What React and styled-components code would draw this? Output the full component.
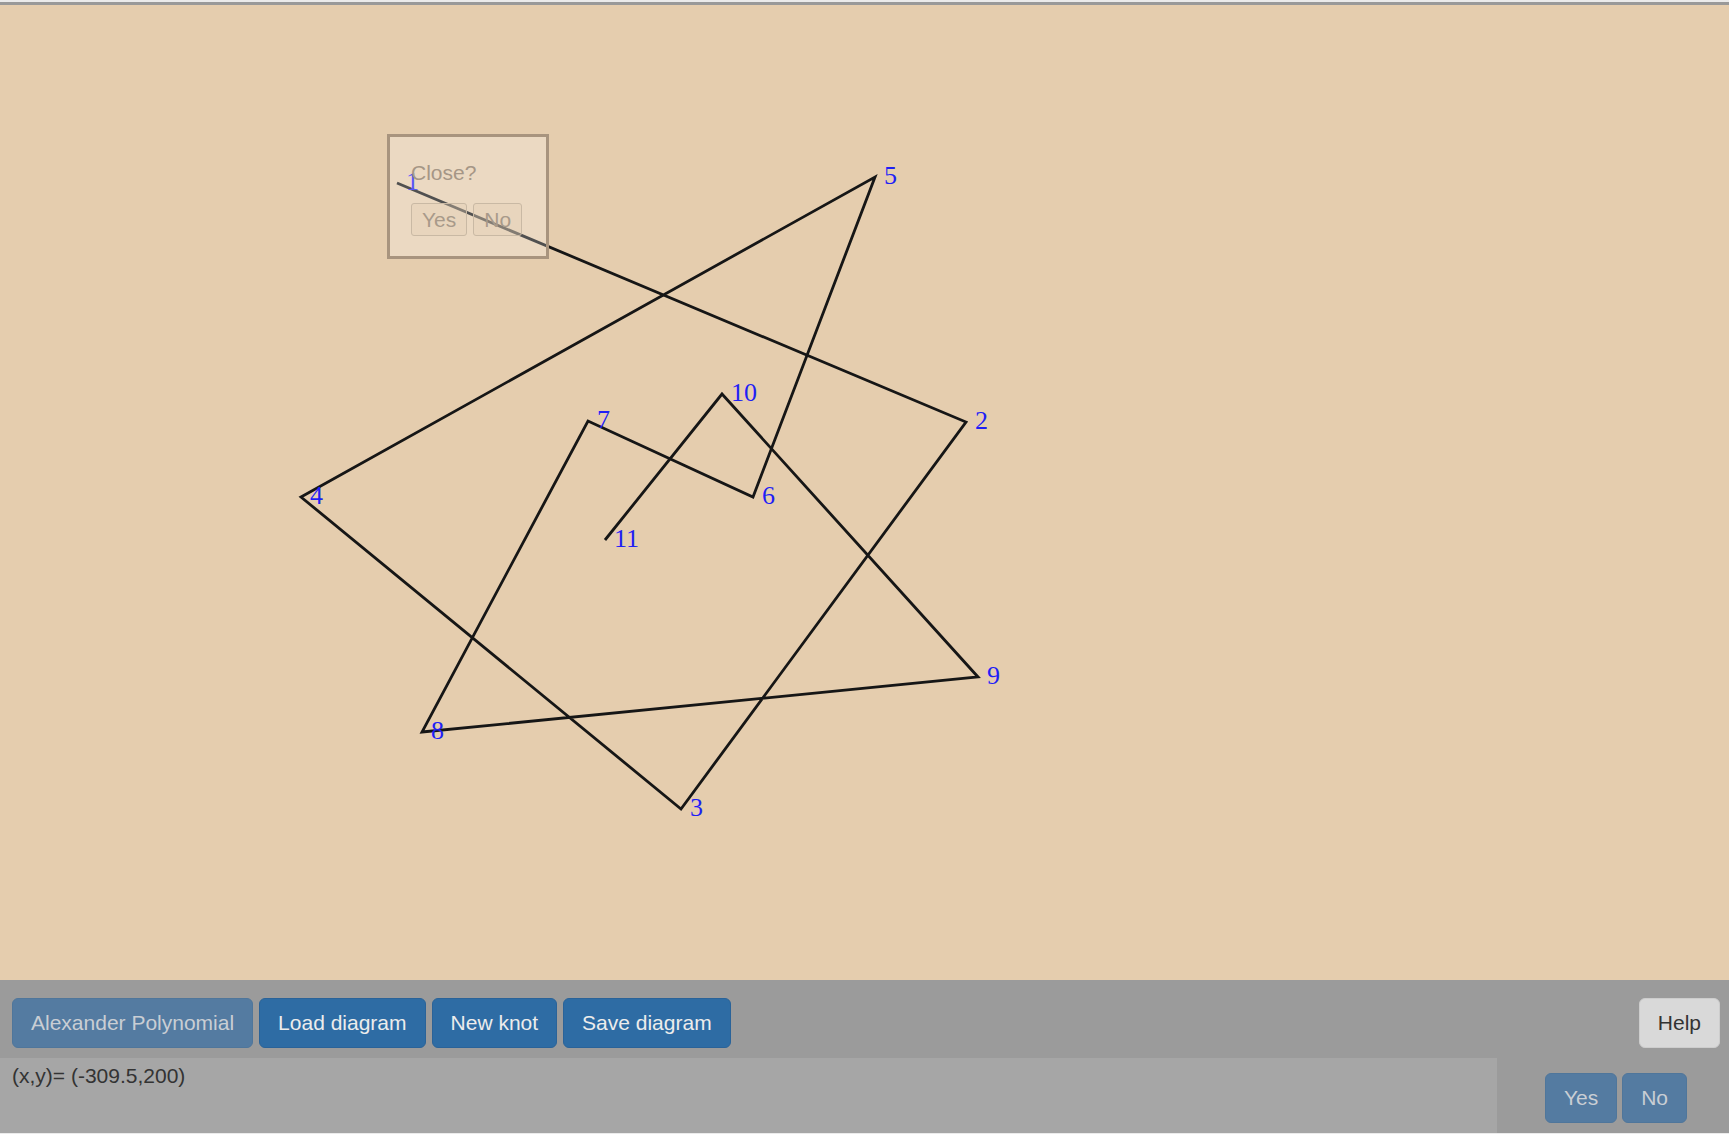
import React from 'react'
import styled, { createGlobalStyle } from 'styled-components'

const GlobalStyle = createGlobalStyle`
  html, body {
    margin: 0;
    padding: 0;
    background: #ebebeb;
    font-family: "Liberation Sans", Arial, sans-serif;
  }
  * { box-sizing: border-box; }
`

// vertices of the knot, in canvas coordinates (canvas starts 5px below page top)
const points = [
  [397, 178],
  [966, 417],
  [681, 804],
  [301, 492],
  [875, 172],
  [753, 492],
  [588, 416],
  [422, 727],
  [978, 672],
  [722, 389],
  [605, 535],
]

const Page = styled.div`
  width: 1729px;
  height: 1134px;
  padding-top: 2px;
  display: flex;
  flex-direction: column;
  overflow: hidden;
`

const Canvas = styled.div`
  position: relative;
  height: 978px;
  background: #e5cdae;
  border-top: 3px solid #999999;
`

const Drawing = styled.svg`
  display: block;
  width: 100%;
  height: 100%;
`

const Label = styled.text`
  font-family: "Liberation Serif", "Times New Roman", serif;
  font-size: 26px;
  fill: #1f1ff5;
`

const Dialog = styled.div`
  position: absolute;
  left: 387px;
  top: 129px;
  width: 162px;
  height: 125px;
  padding: 23px 0 0 21px;
  border: 3px solid #a8947e;
  background: rgba(255, 255, 255, 0.25);
`

const DialogText = styled.div`
  font-size: 21px;
  line-height: 25px;
  color: #a59686;
  margin-bottom: 18px;
`

const DialogButtons = styled.div`
  display: flex;
  gap: 6px;
`

const DialogButton = styled.button`
  font-family: "Liberation Sans", Arial, sans-serif;
  font-size: 21px;
  line-height: 23px;
  padding: 4px 10px;
  border: 1px solid #c9b9a4;
  border-radius: 3px;
  background: rgba(225, 205, 180, 0.35);
  color: #a89a8a;
`

const Panel = styled.div`
  flex: 1;
  background: #9b9b9b;
  display: flex;
  flex-direction: column;
  border-bottom: 1px solid #ebebeb;
`

const Toolbar = styled.div`
  height: 78px;
  padding: 18px 9px 0 12px;
  display: flex;
  align-items: flex-start;
  justify-content: space-between;
`

const Group = styled.div`
  display: flex;
  align-items: flex-start;
  gap: ${p => p.$gap || 6}px;
`

const Button = styled.button`
  font-family: "Liberation Sans", Arial, sans-serif;
  font-size: 21px;
  line-height: 26px;
  padding: 11px 18px;
  border-radius: 6px;
  border: 1px solid ${p => (p.$light ? '#cdcdcd' : p.$dim ? '#4f769b' : '#2a6399')};
  background: ${p => (p.$light ? '#d9d9d9' : p.$dim ? '#547ba1' : '#2e6ca4')};
  color: ${p => (p.$light ? '#333333' : p.$dim ? '#c9ced4' : '#ececec')};
  cursor: pointer;
`

const StatusRow = styled.div`
  flex: 1;
  display: flex;
`

const Coords = styled.div`
  width: 1497px;
  background: #a6a6a6;
  padding: 5px 12px 0;
  font-size: 21px;
  line-height: 25px;
  color: #333333;
`

const Confirm = styled.div`
  flex: 1;
  display: flex;
  align-items: flex-start;
  justify-content: flex-end;
  padding: 15px 42px 0 0;
`

export default function App() {
  return (
    <Page>
      <GlobalStyle />
      <Canvas>
        <Drawing>
          <polyline
            points={points.map(p => p.join(',')).join(' ')}
            fill="none"
            stroke="#161616"
            strokeWidth="2.8"
            strokeLinejoin="miter"
          />
          {points.map(([x, y], i) => (
            <Label key={i} x={x + 9} y={y + 7}>
              {i + 1}
            </Label>
          ))}
        </Drawing>
        <Dialog>
          <DialogText>Close?</DialogText>
          <DialogButtons>
            <DialogButton>Yes</DialogButton>
            <DialogButton>No</DialogButton>
          </DialogButtons>
        </Dialog>
      </Canvas>
      <Panel>
        <Toolbar>
          <Group>
            <Button $dim>Alexander Polynomial</Button>
            <Button>Load diagram</Button>
            <Button>New knot</Button>
            <Button>Save diagram</Button>
          </Group>
          <Button $light>Help</Button>
        </Toolbar>
        <StatusRow>
          <Coords>(x,y)= (-309.5,200)</Coords>
          <Confirm>
            <Group $gap={5}>
              <Button $dim>Yes</Button>
              <Button $dim>No</Button>
            </Group>
          </Confirm>
        </StatusRow>
      </Panel>
    </Page>
  )
}
